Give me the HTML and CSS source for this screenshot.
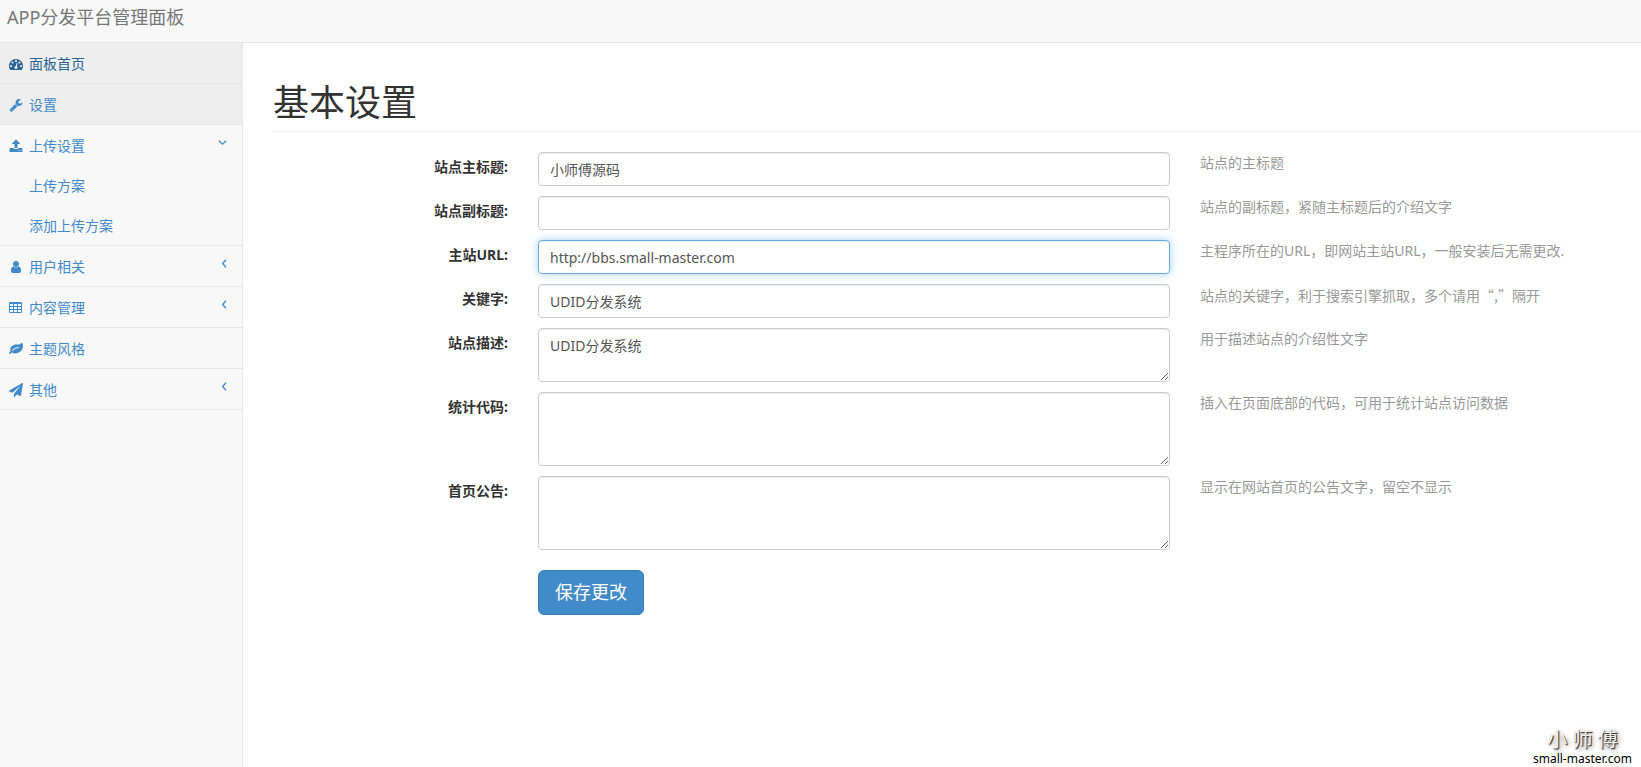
FILE: index.html
```html
<!DOCTYPE html>
<html lang="zh-CN">
<head>
<meta charset="utf-8">
<meta name="viewport" content="width=device-width, initial-scale=1">
<title>APP分发平台管理面板</title>
<link rel="stylesheet" href="styles.css">
</head>
<body>
<header class="topbar"><a class="brand" href="#">APP分发平台管理面板</a></header>
<div class="layout">
  <nav class="sidebar">
    <ul class="menu">
      <li class="menu-item"><a class="menu-link active hover" href="#">
        <svg class="icon" viewBox="0 0 1792 1792"><path d="M384 1152q0-53-37.5-90.5t-90.5-37.5-90.5 37.5-37.5 90.5 37.5 90.5 90.5 37.5 90.5-37.5 37.5-90.5zm192-448q0-53-37.5-90.5t-90.5-37.5-90.5 37.5-37.5 90.5 37.5 90.5 90.5 37.5 90.5-37.5 37.5-90.5zm428 481l101-382q6-26-7.5-48.5t-38.5-29.5-48 6.5-30 39.5l-101 382q-60 5-107 43.5t-63 98.5q-20 77 20 146t117 89 146-20 89-117q16-60-6-117t-72-91zm660-33q0-53-37.5-90.5t-90.5-37.5-90.5 37.5-37.5 90.5 37.5 90.5 90.5 37.5 90.5-37.5 37.5-90.5zm-640-640q0-53-37.5-90.5t-90.5-37.5-90.5 37.5-37.5 90.5 37.5 90.5 90.5 37.5 90.5-37.5 37.5-90.5zm448 192q0-53-37.5-90.5t-90.5-37.5-90.5 37.5-37.5 90.5 37.5 90.5 90.5 37.5 90.5-37.5 37.5-90.5zm320 448q0 261-141 483-19 29-54 29h-1402q-35 0-54-29-141-221-141-483 0-182 71-348t191-286 286-191 348-71 348 71 286 191 191 286 71 348z"/></svg>
        <span>面板首页</span></a></li>
      <li class="menu-item"><a class="menu-link active" href="#">
        <svg class="icon" viewBox="0 0 1792 1792"><path d="M448 1472q0-26-19-45t-45-19-45 19-19 45 19 45 45 19 45-19 19-45zm644-420l-682 682q-37 37-90 37-52 0-91-37l-106-108q-38-36-38-90 0-53 38-91l681-681q39 98 114.5 173.5t173.5 114.5zm634-435q0 39-23 106-47 134-164.5 217.5t-258.5 83.5q-185 0-316.5-131.5t-131.5-316.5 131.5-316.5 316.5-131.5q58 0 121.5 16.5t107.5 46.5q16 11 16 28t-16 28l-293 169v224l193 107q5-3 79-48.5t135.5-81 70.5-35.5q15 0 23.5 10t8.5 25z"/></svg>
        <span>设置</span></a></li>
      <li class="menu-item"><a class="menu-link" href="#">
        <svg class="icon" viewBox="0 0 1792 1792"><path d="M1344 1472q0-26-19-45t-45-19-45 19-19 45 19 45 45 19 45-19 19-45zm256 0q0-26-19-45t-45-19-45 19-19 45 19 45 45 19 45-19 19-45zm128-224v320q0 40-28 68t-68 28h-1472q-40 0-68-28t-28-68v-320q0-40 28-68t68-28h427q21 56 70.5 92t110.5 36h256q61 0 110.5-36t70.5-92h427q40 0 68 28t28 68zm-325-648q-17 40-59 40h-256v448q0 26-19 45t-45 19h-256q-26 0-45-19t-19-45v-448h-256q-42 0-59-40-17-39 14-69l448-448q18-19 45-19t45 19l448 448q31 30 14 69z"/></svg>
        <span>上传设置</span>
        <svg class="arrow" viewBox="0 0 9 9"><path d="M.8 2.8l3.7 3.4 3.7-3.4"/></svg></a>
        <ul class="submenu">
          <li><a class="submenu-link" href="#">上传方案</a></li>
          <li><a class="submenu-link" href="#">添加上传方案</a></li>
        </ul></li>
      <li class="menu-item"><a class="menu-link" href="#">
        <svg class="icon" viewBox="0 0 1792 1792"><path d="M1536 1399q0 109-62.5 187t-150.5 78h-854q-88 0-150.5-78t-62.5-187q0-85 8.5-160.5t31.5-152 58.5-131 94-89 134.5-34.5q131 128 313 128t313-128q76 0 134.5 34.5t94 89 58.5 131 31.5 152 8.5 160.5zm-256-887q0 159-112.5 271.5t-271.5 112.5-271.5-112.5-112.5-271.5 112.5-271.5 271.5-112.5 271.5 112.5 112.5 271.5z"/></svg>
        <span>用户相关</span>
        <svg class="arrow" viewBox="0 0 9 9"><path d="M8 .8L4.6 4.5 8 8.2"/></svg></a></li>
      <li class="menu-item"><a class="menu-link" href="#">
        <svg class="icon" viewBox="0 0 14 14"><path fill-rule="evenodd" d="M1 1h11q1 0 1 1v9q0 1-1 1h-11q-1 0-1-1v-9q0-1 1-1zM1 3v2h3v-2zM5 3v2h3v-2zM9 3v2h3v-2zM1 6v2h3v-2zM5 6v2h3v-2zM9 6v2h3v-2zM1 9v2h3v-2zM5 9v2h3v-2zM9 9v2h3v-2z"/></svg>
        <span>内容管理</span>
        <svg class="arrow" viewBox="0 0 9 9"><path d="M8 .8L4.6 4.5 8 8.2"/></svg></a></li>
      <li class="menu-item"><a class="menu-link" href="#">
        <svg class="icon" viewBox="0 0 1792 1792"><path d="M1280 704q0-26-19-45t-45-19q-172 0-318 49.5t-259.5 134-235.5 219.5q-19 21-19 45 0 26 19 45t45 19q24 0 45-19 27-24 74-71t67-66q137-124 268.5-176t313.5-52q26 0 45-19t19-45zm512-198q0 95-20 193-46 224-184.5 383t-357.5 268q-214 108-438 108-148 0-286-47-15-5-88-42t-96-37q-16 0-39.5 32t-45 70-52.5 70-60 32q-43 0-63.5-17.5t-45.5-59.5q-2-4-6-11t-5.5-10-3-9.5-1.5-13.5q0-35 31-73.5t68-65.5 68-56 31-48q0-4-14-38t-16-44q-9-51-9-104 0-115 43.5-220t119-184.5 170.5-139 204-95.5q55-18 145-25.5t179.5-9 178.5-6 163.5-24 113.5-56.5l29.5-29.5 29.5-28 27-20 36.5-16 43.5-4.5q39 0 70.5 46t47.5 112 24 124 8 96z"/></svg>
        <span>主题风格</span></a></li>
      <li class="menu-item"><a class="menu-link" href="#">
        <svg class="icon" viewBox="0 0 1792 1792"><path d="M1764 11q33 24 27 64l-256 1536q-5 29-32 45-14 8-31 8-11 0-24-5l-453-185-242 295q-18 23-49 23-13 0-22-4-19-7-30.5-23.5t-11.5-36.5v-349l864-1059-1069 925-395-162q-37-14-40-55-2-40 32-59l1664-960q15-9 32-9 20 0 36 11z"/></svg>
        <span>其他</span>
        <svg class="arrow" viewBox="0 0 9 9"><path d="M8 .8L4.6 4.5 8 8.2"/></svg></a></li>
    </ul>
  </nav>
  <main class="content">
    <h1 class="page-header">基本设置</h1>
    <form class="form">
      <div class="row">
        <label class="label" for="title">站点主标题:</label>
        <input class="control" id="title" type="text" value="小师傅源码">
        <p class="help">站点的主标题</p>
      </div>
      <div class="row">
        <label class="label" for="subtitle">站点副标题:</label>
        <input class="control" id="subtitle" type="text">
        <p class="help">站点的副标题，紧随主标题后的介绍文字</p>
      </div>
      <div class="row">
        <label class="label" for="url">主站URL:</label>
        <input class="control focused" id="url" type="text" value="http://bbs.small-master.com">
        <p class="help">主程序所在的URL，即网站主站URL，一般安装后无需更改.</p>
      </div>
      <div class="row">
        <label class="label" for="keywords">关键字:</label>
        <input class="control" id="keywords" type="text" value="UDID分发系统">
        <p class="help">站点的关键字，利于搜索引擎抓取，多个请用<span class="quoted">“,”</span>隔开</p>
      </div>
      <div class="row">
        <label class="label" for="description">站点描述:</label>
        <textarea class="control" id="description" rows="2">UDID分发系统</textarea>
        <p class="help">用于描述站点的介绍性文字</p>
      </div>
      <div class="row">
        <label class="label" for="stats">统计代码:</label>
        <textarea class="control" id="stats" rows="3"></textarea>
        <p class="help">插入在页面底部的代码，可用于统计站点访问数据</p>
      </div>
      <div class="row">
        <label class="label" for="notice">首页公告:</label>
        <textarea class="control" id="notice" rows="3"></textarea>
        <p class="help">显示在网站首页的公告文字，留空不显示</p>
      </div>
      <div class="row actions">
        <button class="save" type="submit">保存更改</button>
      </div>
    </form>
  </main>
</div>
<div class="watermark">
  <span class="watermark-name">小 师 傅</span>
  <span class="watermark-site">small-master.com</span>
</div>
</body>
</html>
```

FILE: styles.css
```css
* { box-sizing: border-box; }

body {
  margin: 0;
  min-height: 100vh;
  display: flex;
  flex-direction: column;
  background: #fff;
  color: #333;
  font: 14px/20px "Noto Sans", "Noto Sans CJK SC", sans-serif;
}

a { color: #428bca; text-decoration: none; }
ul { margin: 0; padding: 0; list-style: none; }

.topbar {
  background: #f8f8f8;
  border-bottom: 1px solid #e7e7e7;
  padding: 7px 7px 15px;
}
.brand { display: block; color: #777; font-size: 18px; }

.layout { flex: 1; display: flex; }

.sidebar {
  flex: 0 0 243px;
  background: #f8f8f8;
  border-right: 1px solid #e7e7e7;
}
.menu-item { border-bottom: 1px solid #e7e7e7; }
.menu-link {
  display: flex;
  align-items: center;
  gap: 6px;
  padding: 11px 15px 9px 9px;
}
.menu-link.active { background: #eee; }
.menu-link.hover, .menu-link:hover { color: #2a6496; }
.submenu-link { display: block; padding: 11px 10px 9px 29px; }

.icon {
  width: 14px;
  height: 14px;
  fill: currentColor;
}
.arrow {
  width: 9px;
  height: 9px;
  margin-left: auto;
  align-self: flex-start;
  margin-top: 2px;
  fill: none;
  stroke: currentColor;
  stroke-width: 1.3;
}

.content { flex: 1; min-width: 0; padding-left: 30px; }
.page-header {
  margin: 40px 0 20px;
  padding-bottom: 8px;
  border-bottom: 1px solid #eee;
  font-size: 36px;
  line-height: 40px;
  font-weight: 400;
}

.form { display: grid; gap: 10px; }
.row {
  display: grid;
  grid-template-columns: 235fr 632fr 441fr;
  column-gap: 30px;
  align-items: start;
}
.label { padding-top: 5px; text-align: right; font-weight: 700; }
.help { margin: 0; padding-top: 1px; color: #999; }
.quoted { font-family: "Noto Sans CJK SC", sans-serif; }
.control {
  display: block;
  width: 100%;
  padding: 7px 11px 5px;
  border: 1px solid #ccc;
  border-radius: 4px;
  background: #fff;
  box-shadow: inset 0 1px 1px rgba(0, 0, 0, .075);
  color: #555;
  font: inherit;
  outline: 0;
}
.control.focused, .control:focus {
  border-color: #66afe9;
  box-shadow: inset 0 1px 1px rgba(0, 0, 0, .075), 0 0 8px rgba(102, 175, 233, .6);
}

.actions { margin-top: 10px; }
.save {
  grid-column: 2;
  justify-self: start;
  padding: 10px 16px;
  border: 1px solid #357ebd;
  border-radius: 6px;
  background: #428bca;
  color: #fff;
  font: inherit;
  font-size: 18px;
  line-height: 23px;
}

.watermark {
  position: absolute;
  right: 9px;
  bottom: 0;
  display: flex;
  flex-direction: column;
  align-items: center;
  color: #000;
}
.watermark-name {
  color: #eee;
  font-size: 20px;
  line-height: 22px;
  text-shadow: 1px 1px 1px #222, 2px 2px 5px #888;
}
.watermark-site { font-size: 12px; line-height: 16px; }
```
